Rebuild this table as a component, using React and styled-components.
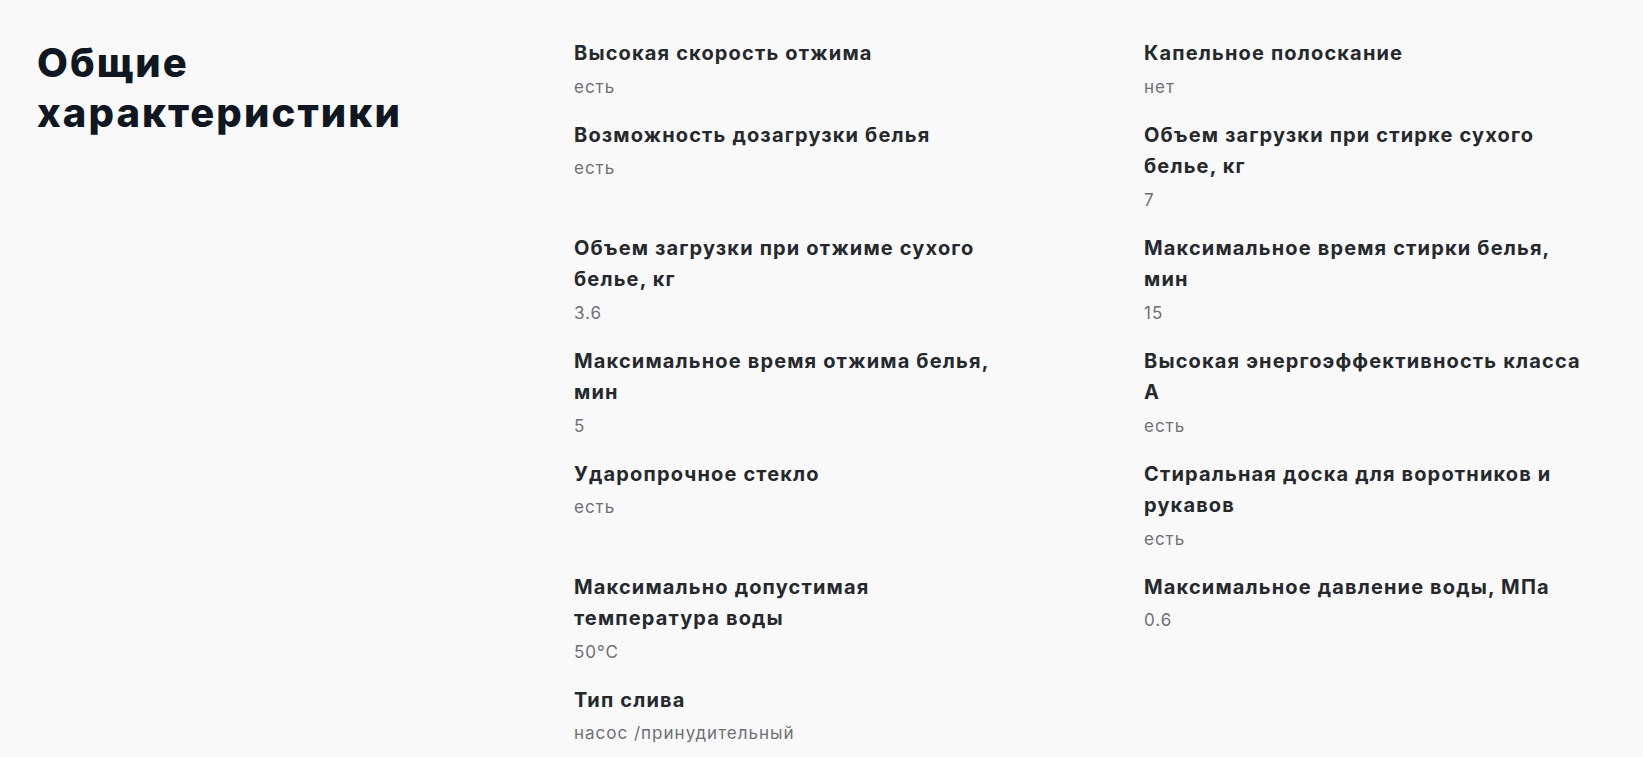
import React from "react";
import styled, { createGlobalStyle } from "styled-components";

const Global = createGlobalStyle`
  html, body { margin: 0; padding: 0; background: #f9f9f9; }
  body { font-family: Inter, "Noto Sans", Arial, sans-serif; -webkit-font-smoothing: antialiased; }
`;

const Section = styled.section`
  display: flex;
  align-items: flex-start;
  padding: 38px 37px 0 37px;
  background: #f9f9f9;
  min-height: 757px;
  box-sizing: border-box;
`;

const Heading = styled.h2`
  flex: 0 0 537px;
  margin: 0;
  font-family: Inter, "Noto Sans", sans-serif;
  font-weight: 800;
  font-size: 40px;
  line-height: 50px;
  color: #0f1722;
  letter-spacing: 2.1px;
`;

const SpecGrid = styled.dl`
  display: grid;
  grid-template-columns: repeat(2, 440px);
  column-gap: 130px;
  row-gap: 21px;
  margin: 0;
  align-items: start;
`;

const Spec = styled.div`
  display: flex;
  flex-direction: column;
`;

const SpecName = styled.dt`
  margin: 0;
  font-weight: 700;
  font-size: 20px;
  line-height: 31.5px;
  color: #25292e;
  letter-spacing: 1.15px;
`;

const SpecValue = styled.dd`
  margin: 5px 0 0 0;
  font-weight: 400;
  font-size: 17px;
  line-height: 24px;
  color: #6d7077;
  letter-spacing: 1px;
`;

const specs = [
  ["Высокая скорость отжима", "есть"],
  ["Капельное полоскание", "нет"],
  ["Возможность дозагрузки белья", "есть"],
  ["Объем загрузки при стирке сухого белье, кг", "7"],
  ["Объем загрузки при отжиме сухого белье, кг", "3.6"],
  ["Максимальное время стирки белья, мин", "15"],
  ["Максимальное время отжима белья, мин", "5"],
  ["Высокая энергоэффективность класса А", "есть"],
  ["Ударопрочное стекло", "есть"],
  ["Стиральная доска для воротников и рукавов", "есть"],
  ["Максимально допустимая температура воды", "50°C"],
  ["Максимальное давление воды, МПа", "0.6"],
  ["Тип слива", "насос /принудительный"],
];

export default function App() {
  return (
    <>
      <Global />
      <Section>
        <Heading>
          Общие
          <br />
          характеристики
        </Heading>
        <SpecGrid>
          {specs.map(([name, value]) => (
            <Spec key={name}>
              <SpecName>{name}</SpecName>
              <SpecValue>{value}</SpecValue>
            </Spec>
          ))}
        </SpecGrid>
      </Section>
    </>
  );
}
